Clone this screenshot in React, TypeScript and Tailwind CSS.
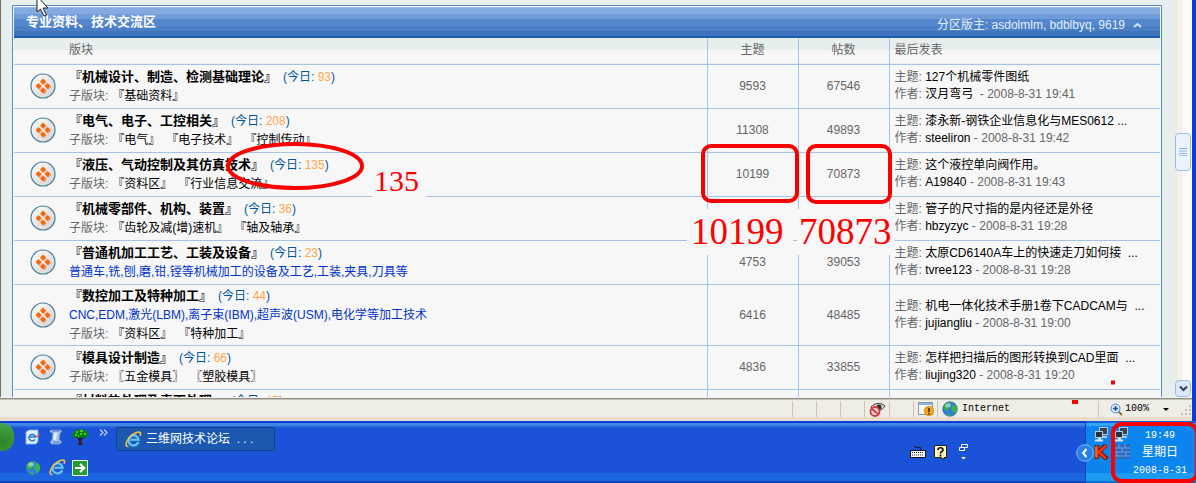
import React from 'react'

type Forum = {
  name: string
  today: string
  desc?: string
  subs?: string[]
  topics?: string
  posts?: string
  last?: string
  author?: string
  date?: string
}

const forums: Forum[] = [
  { name: '『机械设计、制造、检测基础理论』', today: '93', subs: ['『基础资料』'], topics: '9593', posts: '67546', last: '127个机械零件图纸', author: '汊月弯弓\u00a0', date: '2008-8-31 19:41' },
  { name: '『电气、电子、工控相关』', today: '208', subs: ['『电气』', '『电子技术』', '『控制传动』'], topics: '11308', posts: '49893', last: '漆永新-钢铁企业信息化与MES0612 ...', author: 'steeliron', date: '2008-8-31 19:42' },
  { name: '『液压、气动控制及其仿真技术』', today: '135', subs: ['『资料区』', '『行业信息交流』'], topics: '10199', posts: '70873', last: '这个液控单向阀作用。', author: 'A19840', date: '2008-8-31 19:43' },
  { name: '『机械零部件、机构、装置』', today: '36', subs: ['『齿轮及减(增)速机』', '『轴及轴承』'], last: '管子的尺寸指的是内径还是外径', author: 'hbzyzyc', date: '2008-8-31 19:28' },
  { name: '『普通机加工工艺、工装及设备』', today: '23', desc: '普通车,铣,刨,磨,钳,镗等机械加工的设备及工艺,工装,夹具,刀具等', topics: '4753', posts: '39053', last: '太原CD6140A车上的快速走刀如何接\u00a0 ...', author: 'tvree123', date: '2008-8-31 19:28' },
  { name: '『数控加工及特种加工』', today: '44', desc: 'CNC,EDM,激光(LBM),离子束(IBM),超声波(USM),电化学等加工技术', subs: ['『资料区』', '『特种加工』'], topics: '6416', posts: '48485', last: '机电一体化技术手册1卷下CADCAM与\u00a0 ...', author: 'jujiangliu', date: '2008-8-31 19:00' },
  { name: '『模具设计制造』', today: '66', subs: ['〖五金模具〗', '〖塑胶模具〗'], topics: '4836', posts: '33855', last: '怎样把扫描后的图形转换到CAD里面\u00a0 ...', author: 'liujing320', date: '2008-8-31 19:20' },
  { name: '『材料热处理及表面处理』', today: '17' },
]

const ForumIcon = () => (
  <svg width="26" height="26" viewBox="0 0 26 26" className="block">
    <defs>
      <linearGradient id="disc" x1="0" y1="0" x2="1" y2="1">
        <stop offset="0.2" stopColor="#f6f5f5" />
        <stop offset="1" stopColor="#d8cfcf" />
      </linearGradient>
    </defs>
    <circle cx="13" cy="13" r="12" fill="url(#disc)" stroke="#44809f" strokeWidth="1.2" />
    <path d="M14 6.500l3 3-3 3-3-3zM9.500 11l3 3-3 3-3-3zM18.500 11l3 3-3 3-3-3zM14 15.500l3 3-3 3-3-3z" fill="#c4bcbc" />
    <path d="M13 5.500l3 3-3 3-3-3zM8.500 10l3 3-3 3-3-3zM17.500 10l3 3-3 3-3-3zM13 14.500l3 3-3 3-3-3z" fill="#f60" />
  </svg>
)

const IeIcon = () => (
  <svg width="17" height="17" viewBox="0 0 17 17">
    <path d="M13.500 11.200A5 5 0 1 1 13.600 8.800H5.500" fill="none" stroke="#1c6fd0" strokeWidth="3.600" />
    <path d="M13.300 11.200A5 5 0 1 1 13.600 8.800H5.500" fill="none" stroke="#6cc6fa" strokeWidth="2" />
    <path d="M3.500 15.500C-.5 16 .8 10.500 5 6 9 1.800 14.500-.3 15.500 1.800c.4.900 0 2-.700 3" fill="none" stroke="#f6c244" strokeWidth="1.600" />
  </svg>
)

const GlobeIcon = () => (
  <svg width="16" height="16" viewBox="0 0 16 16">
    <circle cx="8" cy="8" r="7.300" fill="#2e7fd6" stroke="#1b5a9c" strokeWidth="0.600" />
    <path d="M3 3.500C5 1.500 8 1 9 1.500L8 4l-2 1 1 2-2 3-2-2-1.500.500C1.300 6.500 2 4.500 3 3.500zM10 5l3-2c2 2 2.500 5 1.500 7.500L12 13l-1-3-2-1.500zM5 12l3 1v2c-2 0-3-1-3-3z" fill="#3bb54a" />
    <ellipse cx="6" cy="4.500" rx="3" ry="2" fill="#fff" opacity="0.450" />
  </svg>
)

const DesktopIcon = () => (
  <svg width="16" height="16" viewBox="0 0 16 16">
    <path d="M1 3l3-2h9v11l-2 3H1z" fill="#e8f2fc" stroke="#7db1e8" />
    <path d="M10 10.500A3.300 3.300 0 1 1 10.500 8H5" fill="none" stroke="#2579d0" strokeWidth="1.600" />
    <path d="M11 8l4-3" stroke="#e2602b" strokeWidth="1.500" />
  </svg>
)

const ScrollIcon = () => (
  <svg width="14" height="16" viewBox="0 0 14 16">
    <path d="M2 1h9c2 0 2 3 0 3l-1 7c3 0 3 4 0 4H3c-2 0-2-3 0-4l1-7C1 4 0 2 2 1z" fill="#a9c8f0" stroke="#6d92cc" />
    <path d="M5 4l-1 7h3l1-7z" fill="#e4effc" />
    <path d="M3 2h8M4 13h7" stroke="#4f76b8" />
  </svg>
)

const TreeIcon = () => (
  <svg width="16" height="16" viewBox="0 0 16 16">
    <path d="M7 8h2.500v6l1.500 2H5.500L7 14z" fill="#3b1b05" />
    <path d="M4 8l4 3 5-3" stroke="#241005" fill="none" />
    <path d="M1 4l3-3 4-1 5 1 3 3v3l-3 2-3-1-3 1-4 0-3-2z" fill="#0d7d12" />
    <path d="M4 3h2M8 2h3M3 6h2M8 5h2M12 5h2M6 7h1" stroke="#52e03e" strokeWidth="1.500" />
  </svg>
)

const GoIcon = () => (
  <svg width="16" height="16" viewBox="0 0 16 16">
    <rect x="0.500" y="0.500" width="15" height="15" fill="#279a35" stroke="#e8ffe8" />
    <path d="M3 8h9M8 4l4.300 4L8 12" fill="none" stroke="#fff" strokeWidth="2" />
  </svg>
)

const MonitorsIcon = () => (
  <svg width="15" height="15" viewBox="0 0 15 15">
    <rect x="5.500" y="0.500" width="8" height="7" fill="#344456" stroke="#b9c6d6" />
    <path d="M8 10h5" stroke="#b9c6d6" strokeWidth="2" />
    <rect x="1.500" y="4.500" width="7" height="6" fill="#26323f" stroke="#b9c6d6" />
    <path d="M1 13.500h8M4 12h3" stroke="#d8e4f4" strokeWidth="2" />
  </svg>
)

function rowHeight(forum: Forum) {
  if (!forum.desc && !forum.subs) return 'h-6'
  return forum.desc && forum.subs ? 'h-[61px]' : 'h-11'
}

function ForumRow({ forum }: { forum: Forum }) {
  return (
    <tr className={`${rowHeight(forum)} border-b border-[#a3c4e6]`}>
      <td className="pl-4">{forum.last && <ForumIcon />}</td>
      <td className="leading-[19px]">
        <div>
          <a href="#" className="text-[13px] font-bold text-black">{forum.name}</a>
          <span className="ml-1.5 text-[#00559b]">(今日: <span className="text-[#ffa64d]">{forum.today}</span>)</span>
        </div>
        {forum.desc && <div className="text-[#0033cc]">{forum.desc}</div>}
        {forum.subs && (
          <div className="flex gap-1.5">
            <span className="-mr-0.5">子版块:</span>
            {forum.subs.map((sub) => <a key={sub} href="#" className="text-black">{sub}</a>)}
          </div>
        )}
      </td>
      <td className="border-l border-[#a3c4e6] text-center">{forum.topics}</td>
      <td className="border-l border-[#a3c4e6] text-center">{forum.posts}</td>
      <td className="border-l border-[#a3c4e6] pl-[5px] leading-[17px] whitespace-nowrap">
        {forum.last && (
          <>
            <div>主题: <a href="#" className="text-black">{forum.last}</a></div>
            <div>作者: <a href="#" className="text-black">{forum.author}</a> - {forum.date}</div>
          </>
        )}
      </td>
    </tr>
  )
}

function ForumPanel() {
  return (
    <section className="border border-[#5a8dc0] bg-[#f7f7f7] p-px">
      <header className="flex h-[31px] items-start justify-between border-b-2 border-[#1d5fae] bg-[linear-gradient(#9cbdec_0_1px,#84abe0_1px_7px,#6f9cd8_7px_12px,#5487cc_12px_19px,#4a7ec5_19px_24px,#3f74ba_24px)] pr-4 pl-3 text-[#e3effc]">
        <h2 className="pt-[7px] text-[13px] leading-4 font-bold text-white">专业资料、技术交流区</h2>
        <div className="flex items-center gap-2 pt-[10px] leading-4">
          <span>分区版主: <a href="#">asdolmlm</a>, <a href="#">bdblbyq</a>, <a href="#">9619</a></span>
          <button aria-label="收起" className="mr-0.5">
            <svg width="9" height="6" viewBox="0 0 9 6"><path d="M1 5l3.500-3L8 5" fill="none" stroke="#d4e4f8" strokeWidth="2" /></svg>
          </button>
        </div>
      </header>
      <table className="w-full table-fixed border-collapse">
        <colgroup>
          <col className="w-[55px]" />
          <col />
          <col className="w-[91px]" />
          <col className="w-[91px]" />
          <col className="w-[271px]" />
        </colgroup>
        <thead>
          <tr className="h-[26px] border-b border-[#a3c4e6] bg-[linear-gradient(#e6eeee_0_12px,#f7f7f7_12px)]">
            <th />
            <th className="pb-0.5 text-left font-normal">版块</th>
            <th className="border-l border-[#a3c4e6] pb-0.5 font-normal">主题</th>
            <th className="border-l border-[#a3c4e6] pb-0.5 font-normal">帖数</th>
            <th className="border-l border-[#a3c4e6] pb-0.5 pl-[5px] text-left font-normal">最后发表</th>
          </tr>
        </thead>
        <tbody>
          {forums.map((forum) => <ForumRow key={forum.name} forum={forum} />)}
        </tbody>
      </table>
    </section>
  )
}

function ScrollBar() {
  return (
    <div className="flex w-[18px] shrink-0 flex-col justify-between bg-[linear-gradient(90deg,#efece3_0_4px,#f3f3ee_4px_9px,#fbfbfc_9px)] pt-[133px]">
      <div className="mx-px flex h-[38px] items-center justify-center rounded-sm border border-[#9dbbe8] bg-[#eef4fd]">
        <svg width="8" height="8" viewBox="0 0 8 8"><path d="M0 .5h8M0 3h8M0 5.500h8M0 7.800h8" stroke="#8db4e6" /></svg>
      </div>
      <button aria-label="向下滚动" className="mx-px flex h-[17px] items-center justify-center rounded-sm border border-[#9dbbe8] bg-[#dce8fa]">
        <svg width="9" height="7" viewBox="0 0 9 7"><path d="M1 1.500L4.500 5 8 1.500" fill="none" stroke="#34465e" strokeWidth="2.200" /></svg>
      </button>
    </div>
  )
}

function StatusBar() {
  return (
    <div className="flex h-6 shrink-0 border-r-4 border-[#0a3ed6] bg-[linear-gradient(#f4f3f0_0_1px,#8f8d85_1px_2px,#c4c1b4_2px_3px,#efeee6_3px_20px,#e9dccb_20px)] text-black">
      <div className="flex-1" />
      <div className="my-1 w-6 border-l border-[#c9c6b6]" />
      <div className="my-1 w-6 border-l border-[#c9c6b6]" />
      <div className="my-1 w-6 border-l border-[#c9c6b6]" />
      <div className="my-1 flex w-[25px] items-center justify-center border-l border-[#c9c6b6]">
        <svg width="17" height="15" viewBox="0 0 17 15">
          <path d="M2 5c3-4 10-5 14-1-3 5-9 6-13 3z" fill="#ddd8d2" stroke="#44352e" />
          <circle cx="10" cy="5" r="2.500" fill="#332a2a" />
          <circle cx="6" cy="9.500" r="4.500" fill="#f4dcdc" stroke="#d33a3a" strokeWidth="1.800" />
          <path d="M3 7l6 5" stroke="#d33a3a" strokeWidth="1.800" />
        </svg>
      </div>
      <div className="my-1 w-6 border-l border-[#c9c6b6]" />
      <div className="my-1 flex w-6 items-center justify-center border-l border-[#c9c6b6]">
        <svg width="16" height="14" viewBox="0 0 16 14">
          <rect x="0.500" y="0.500" width="14" height="12" fill="#fafaf5" stroke="#8e98a5" />
          <path d="M1 2h13" stroke="#8fb5dc" strokeWidth="2" />
          <circle cx="11" cy="9" r="4.800" fill="#f5a71c" stroke="#b8720a" strokeWidth="0.600" />
          <path d="M11 6v4M11 11v1.500" stroke="#3a2200" strokeWidth="1.500" />
        </svg>
      </div>
      <div className="my-1 flex w-[161px] items-center gap-1 border-l border-[#c9c6b6] pl-1 font-[Liberation_Mono,monospace] text-[10px]">
        <GlobeIcon /><span>Internet</span>
      </div>
      <button className="my-1 flex w-[94px] items-center border-l border-[#c9c6b6] pl-[11px] font-[Liberation_Mono,monospace] text-[10px]">
        <svg width="13" height="13" viewBox="0 0 13 13">
          <path d="M8 8l4 4" stroke="#8a6a3c" strokeWidth="2" />
          <circle cx="5.500" cy="5.500" r="4.500" fill="#d9ecfc" stroke="#4a8ad0" />
          <path d="M3 5.500h5M5.500 3v5" stroke="#1c4fa0" strokeWidth="1.500" />
        </svg>
        <span className="ml-0.5">100%</span>
        <svg width="6" height="3" viewBox="0 0 6 3" className="ml-3.5"><path d="M0 0h6L3 3z" /></svg>
        <svg width="12" height="12" viewBox="0 0 12 12" className="mt-1 ml-auto"><path d="M9 1h2M9 5h2M5 5h2M9 9h2M5 9h2M1 9h2" stroke="#cbb9b0" strokeWidth="2" /></svg>
      </button>
    </div>
  )
}

function TaskBar() {
  return (
    <footer className="flex h-[62px] shrink-0 bg-[linear-gradient(#0a3fd8_0_2px,#3f86e4_2px_5px,#2563dc_5px_7px,#1a53d8_7px_52px,#1b66e0_52px_60px,#0d47b8_60px)] text-white">
      <button aria-label="开始" className="mt-0.5 h-7 w-3.5 shrink-0 rounded-r-xl bg-[radial-gradient(circle_at_20%_70%,#2c8427,#3b9a3c_60%,#55a866)]" />
      <nav className="ml-[11px] grid shrink-0 grid-cols-[24px_23px_27px_17px] grid-rows-[31px_31px] items-center">
        <button aria-label="显示桌面"><DesktopIcon /></button>
        <button aria-label="文档"><ScrollIcon /></button>
        <button aria-label="树"><TreeIcon /></button>
        <button aria-label="更多" className="-mt-2">
          <svg width="9" height="7" viewBox="0 0 9 7"><path d="M1 .5l3 3-3 3M5 .5l3 3-3 3" fill="none" stroke="#bcd4fb" strokeWidth="1.200" /></svg>
        </button>
        <button aria-label="网络"><GlobeIcon /></button>
        <button aria-label="浏览器"><IeIcon /></button>
        <button aria-label="转到"><GoIcon /></button>
      </nav>
      <button className="mt-1.5 flex h-6 w-[159px] shrink-0 items-center gap-1 rounded-xs border border-[#12418e] bg-[#1b58b0] pl-2 text-left">
        <IeIcon />
        <span>三维网技术论坛&nbsp; . . .</span>
      </button>
      <div className="ml-auto flex items-center gap-3 pr-3">
        <svg width="16" height="12" viewBox="0 0 16 12">
          <path d="M4 0l3 2 3-1 1 3" fill="none" stroke="#111" />
          <rect x="0.500" y="4.500" width="15" height="7" fill="#fff" stroke="#111" />
          <path d="M2 6.500h12M2 9h12" stroke="#111" strokeDasharray="1 1" />
        </svg>
        <svg width="13" height="15" viewBox="0 0 13 15" className="-ml-1">
          <path d="M.5.5h12v12H10v2l-3-2H.5z" fill="#fff6b8" stroke="#222" />
          <path d="M4 5c0-3 5-3 5 0 0 1.500-2.500 1.500-2.500 3.500M6.500 9.500v2" fill="none" stroke="#111" strokeWidth="1.700" />
        </svg>
        <svg width="9" height="17" viewBox="0 0 9 17">
          <path d="M2.500.5h6v3h-6zM.5 3.500h5v3h-5z" fill="#1a53d8" stroke="#fff" />
          <path d="M2 13h5l-2.500 2.500z" fill="#fff" />
        </svg>
      </div>
      <div className="relative ml-[105px] flex w-[111px] shrink-0 border-l border-[#0d3fae] bg-[linear-gradient(#0d5fdc_0_2px,#35a3f3_2px_5px,#0c86ee_5px_52px,#1c9bf2_52px_60px,#0b6fd0_60px)]">
        <button aria-label="隐藏图标" className="absolute top-[23px] -left-2.5">
          <svg width="18" height="18" viewBox="0 0 18 18">
            <circle cx="9" cy="9" r="8.300" fill="#2a7fe6" stroke="#9cc6f6" strokeWidth="0.800" />
            <path d="M10.500 5L7 9l3.500 4" fill="none" stroke="#fff" strokeWidth="2" />
          </svg>
        </button>
        <div className="grid grid-cols-2 content-start gap-x-1 gap-y-0.5 pt-1.5 pl-2">
          <MonitorsIcon />
          <MonitorsIcon />
          <svg width="15" height="16" viewBox="0 0 15 16">
            <path d="M3 1v14M12 1L5 8l8 7" fill="none" stroke="#5a0f06" strokeWidth="4.500" />
            <path d="M3 1.500v13M12 1.500L5 8l7 6.500" fill="none" stroke="#f2330d" strokeWidth="3" />
            <path d="M2 3v10" stroke="#ff9a2e" />
          </svg>
          <svg width="16" height="15" viewBox="0 0 16 15">
            <rect width="16" height="15" fill="#2f68b8" />
            <path d="M0 4h16M0 8h16M0 12h16M5 0v4M11 0v4M8 4v4M3 8v4M12 8v4" stroke="#5fa6ee" />
          </svg>
        </div>
        <div className="flex flex-1 flex-col items-center pt-1.5 pr-1.5 font-[Liberation_Mono,Noto_Sans_CJK_SC,monospace] text-[10px] leading-[18px]">
          <span>19:49</span>
          <span className="text-xs leading-[17px]">星期日</span>
          <span>2008-8-31</span>
        </div>
      </div>
    </footer>
  )
}

// Red pen marks drawn on top of the desktop
function Annotations() {
  return (
    <div className="pointer-events-none absolute inset-0 font-[Liberation_Serif,serif] text-[#ff0000]">
      <span className="absolute top-[167px] left-[372px] w-[54px] bg-[#f7f7f7] pb-0.5 pl-0.5 text-[30px] leading-[28px]">135</span>
      <span className="absolute top-[209px] left-[687px] w-[106px] bg-[#f7f7f7] pl-1 text-[37px] leading-[46px]">10199</span>
      <span className="absolute top-[209px] left-[797px] w-[98px] bg-[#f7f7f7] pl-0.5 text-[37px] leading-[46px]">70873</span>
      <svg width="1196" height="483" viewBox="0 0 1196 483" className="absolute top-0 left-0" fill="none" stroke="#f80000" strokeWidth="4">
        <ellipse cx="295" cy="166" rx="67" ry="22" />
        <rect x="703" y="146" width="94" height="55" rx="8" />
        <rect x="808" y="146" width="82" height="56" rx="8" />
        <rect x="1113" y="424" width="84" height="57" rx="9" />
        <path d="M1111 382.500h4M1072 402h6" />
        <path d="M37-4v16l3.500-3 3.500 7 2.500-1-3.500-7h5z" fill="#fff" stroke="#222" strokeWidth="1" />
      </svg>
    </div>
  )
}

export default function App() {
  return (
    <div className="relative flex h-screen flex-col overflow-hidden font-[Liberation_Sans,Noto_Sans_CJK_SC,sans-serif] text-xs text-[#666]">
      <div className="flex min-h-0 flex-1 border-r-4 border-l border-r-[#0a3ed6] border-l-[#716f64] bg-[#e6eeee]">
        <main className="min-w-0 flex-1 overflow-hidden pt-[5px] pr-3 pl-[11px]">
          <ForumPanel />
        </main>
        <ScrollBar />
      </div>
      <StatusBar />
      <TaskBar />
      <Annotations />
    </div>
  )
}
